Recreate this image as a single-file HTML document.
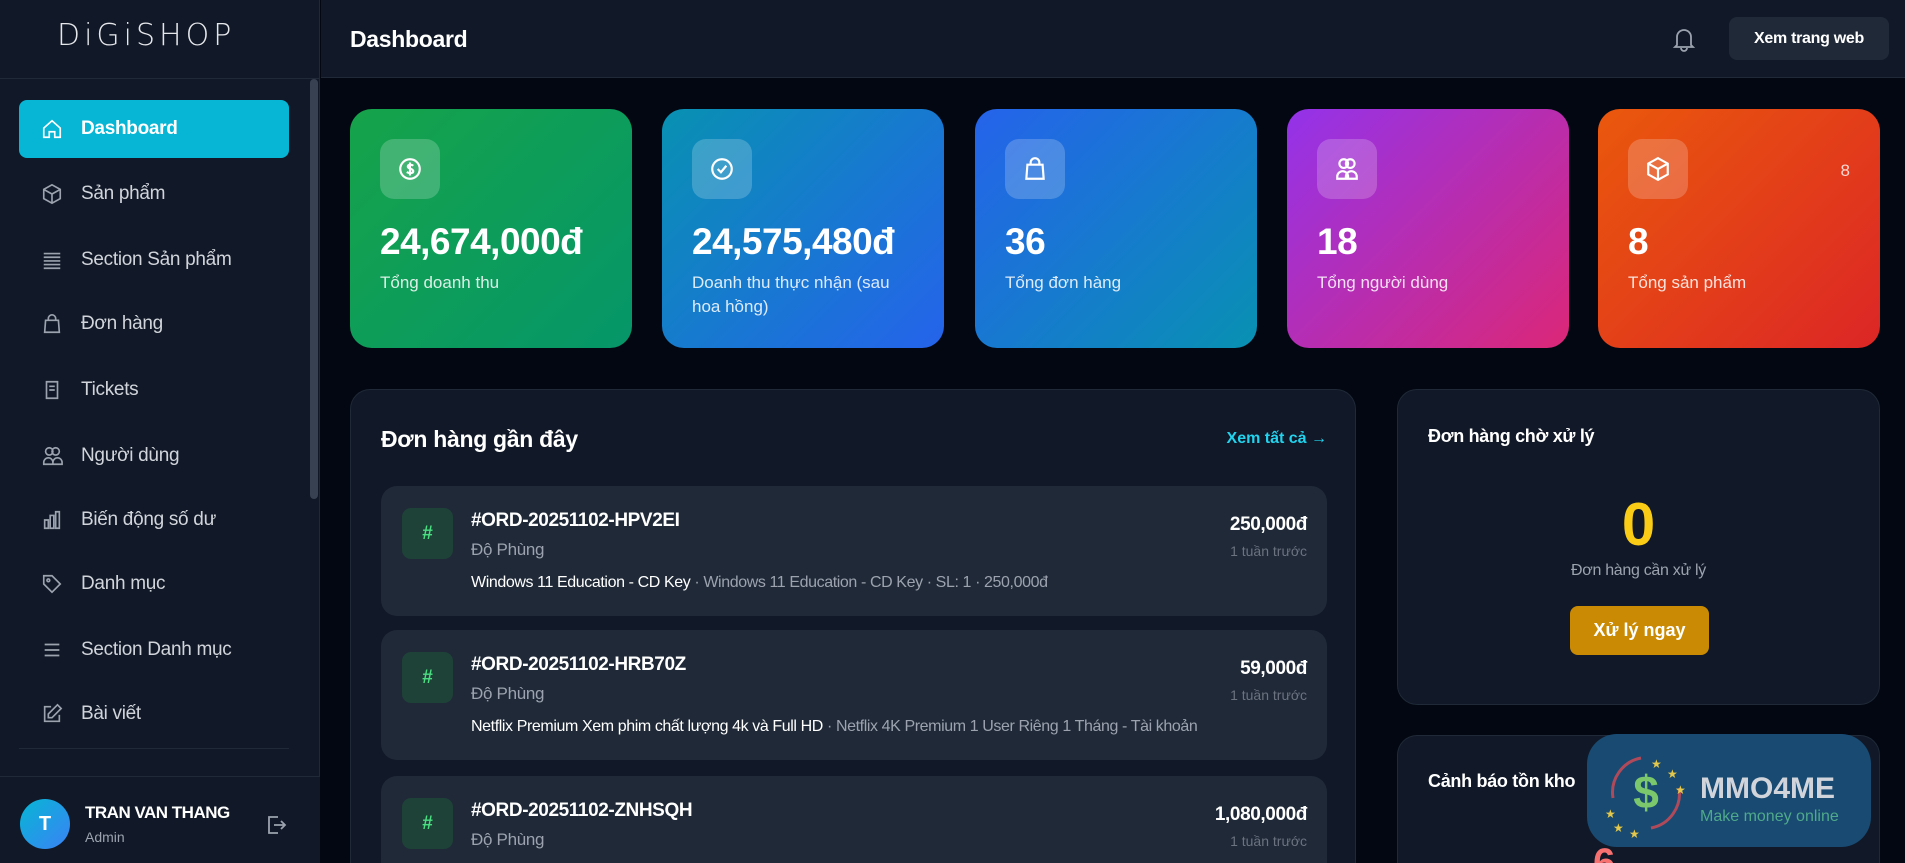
<!DOCTYPE html>
<html style="width:1905px;height:863px;overflow:hidden"><head><meta charset="utf-8">
<style>
*{box-sizing:border-box;margin:0;padding:0}
body{width:1905px;height:863px;overflow:hidden;background:#030712;font-family:"Liberation Sans","DejaVu Sans",sans-serif;color:#fff;position:relative}
.side{position:absolute;left:0;top:0;width:320px;height:863px;background:#111827;border-right:1px solid #1f2937}
.logo{position:absolute;left:57px;top:18px;font-size:30px;letter-spacing:4px;font-weight:300;color:#e5e7eb;font-family:"DejaVu Sans",sans-serif}
.sidetop{position:absolute;left:0;top:78px;width:320px;border-top:1px solid #1f2937}
.nav{position:absolute;left:19px;width:270px;height:58px;border-radius:8px;display:flex;align-items:center;padding-left:22px;font-size:19px;color:#d1d5db;letter-spacing:-0.3px}
.nav svg{width:22px;height:22px;margin-right:18px;stroke:#9ca3af;fill:none;stroke-width:1.8}
.nav.act{background:#06b6d4;color:#fff;font-weight:bold}
.nav.act svg{stroke:#fff}
.scroll{position:absolute;left:310px;top:79px;width:8px;height:420px;background:#374151;border-radius:4px}
.user{position:absolute;left:0;top:776px;width:320px;height:87px;border-top:1px solid #1f2937;background:#111827}
.av{position:absolute;left:20px;top:22px;width:50px;height:50px;border-radius:50%;background:linear-gradient(135deg,#06b6d4,#3b82f6);display:flex;align-items:center;justify-content:center;font-weight:bold;font-size:20px}
.header{position:absolute;left:321px;top:0;width:1584px;height:78px;background:#111827;border-bottom:1px solid #1f2937}
.card{position:absolute;top:109px;width:282px;height:239px;border-radius:22px;padding:30px 30px}
.ib{width:60px;height:60px;border-radius:14px;background:rgba(255,255,255,.2);display:flex;align-items:center;justify-content:center}
.ib svg{width:26px;height:26px;stroke:#fff;fill:none;stroke-width:2}
.num{font-size:37px;font-weight:bold;margin-top:22px;letter-spacing:-0.5px}
.lab{font-size:17px;color:rgba(255,255,255,.85);margin-top:8px;line-height:24px}
.panel{position:absolute;background:#111827;border:1px solid #1f2937;border-radius:20px;overflow:hidden}
.ord{position:absolute;left:30px;width:946px;height:130px;background:#1f2937;border-radius:16px}
.hash{position:absolute;left:21px;top:22px;width:51px;height:51px;background:#1e4237;border-radius:9px;color:#4ade80;font-weight:bold;font-size:19px;display:flex;align-items:center;justify-content:center}
.oid{position:absolute;left:90px;top:24px;font-size:19px;font-weight:bold;letter-spacing:-0.4px}
.nm{position:absolute;left:90px;top:54px;font-size:17px;color:#9ca3af;letter-spacing:-0.3px}
.pr{position:absolute;left:90px;top:88px;font-size:16px;color:#fff;letter-spacing:-0.4px;white-space:nowrap;width:830px;overflow:hidden;text-overflow:ellipsis}
.pr span{color:#9ca3af}
.pc{position:absolute;right:20px;top:28px;font-size:19px;font-weight:bold;text-align:right;letter-spacing:-0.4px}
.tm{position:absolute;right:20px;top:57px;font-size:14px;color:#6b7280}
</style></head><body>
<div class="side">
 <div class="logo">DiGiSHOP</div>
 <div class="sidetop"></div>
 <div class="nav act" style="top:100px"><svg viewBox="0 0 24 24"><path d="M3 11l9-8 9 8v10h-6v-6h-6v6H3z"/></svg>Dashboard</div>
 <div class="nav" style="top:165px"><svg viewBox="0 0 24 24"><path d="M12 2l9 5v10l-9 5-9-5V7z M3 7l9 5 9-5 M12 12v10"/></svg>Sản phẩm</div>
 <div class="nav" style="top:231px"><svg viewBox="0 0 24 24"><path d="M3 5h18M3 9h18M3 13h18M3 17h18M3 21h18"/></svg>Section Sản phẩm</div>
 <div class="nav" style="top:295px"><svg viewBox="0 0 24 24"><path d="M5 8h14l1 13H4z M8 8V6a4 4 0 018 0v2"/></svg>Đơn hàng</div>
 <div class="nav" style="top:361px"><svg viewBox="0 0 24 24"><path d="M6 3h12v18H6z M9 8h6M9 12h6"/></svg>Tickets</div>
 <div class="nav" style="top:427px"><svg viewBox="0 0 24 24"><circle cx="9" cy="7" r="4"/><circle cx="16" cy="7" r="4"/><path d="M3 21v-2a5 5 0 0110 0v2zM13 21v-2a5 5 0 0110 0v2z"/></svg>Người dùng</div>
 <div class="nav" style="top:491px"><svg viewBox="0 0 24 24"><path d="M4 21V12h4v9zM10 21V7h4v14zM16 21V3h4v18z"/></svg>Biến động số dư</div>
 <div class="nav" style="top:555px"><svg viewBox="0 0 24 24"><path d="M3 3h9l9 9-9 9-9-9z"/><circle cx="8" cy="8" r="1.5"/></svg>Danh mục</div>
 <div class="nav" style="top:621px"><svg viewBox="0 0 24 24"><path d="M4 6h16M4 12h16M4 18h16"/></svg>Section Danh mục</div>
 <div class="nav" style="top:685px"><svg viewBox="0 0 24 24"><path d="M11 4H4v16h16v-7 M18 2l4 4-10 10H8v-4z"/></svg>Bài viết</div>
 <div style="position:absolute;left:19px;top:748px;width:270px;border-top:1px solid #1f2937"></div>
 <div class="scroll"></div>
 <div class="user">
  <div class="av">T</div>
  <div style="position:absolute;left:85px;top:26px;font-size:17px;font-weight:bold;letter-spacing:-0.5px">TRAN VAN THANG</div>
  <div style="position:absolute;left:85px;top:52px;font-size:14px;color:#9ca3af">Admin</div>
  <svg style="position:absolute;left:264px;top:36px" width="24" height="24" viewBox="0 0 24 24" fill="none" stroke="#9ca3af" stroke-width="1.8"><path d="M14 4H5v16h9 M10 12h11 M17 8l4 4-4 4"/></svg>
 </div>
</div>
<div class="header">
 <div style="position:absolute;left:29px;top:26px;font-size:23px;font-weight:bold;letter-spacing:-0.3px">Dashboard</div>
 <svg style="position:absolute;left:1351px;top:26px" width="24" height="26" viewBox="0 0 24 26" fill="none" stroke="#9ca3af" stroke-width="1.8"><path d="M5 19V11a7 7 0 0114 0v8l2 2H3z M9 22a3 3 0 006 0"/></svg>
 <div style="position:absolute;left:1408px;top:17px;width:160px;height:43px;background:#1f2937;border-radius:8px;font-size:16px;font-weight:bold;display:flex;align-items:center;justify-content:center;letter-spacing:-0.3px">Xem trang web</div>
</div>
<div class="card" style="left:350px;background:linear-gradient(135deg,#16a34a,#059669)"><div class="ib"><svg viewBox="0 0 24 24"><circle cx="12" cy="12" r="9"/><path d="M15 9c-1-1-5-1.5-5 .8S15 11.5 15 14s-4 2-6 .8M12 6v12"/></svg></div><div class="num">24,674,000đ</div><div class="lab">Tổng doanh thu</div></div>
<div class="card" style="left:662px;background:linear-gradient(135deg,#0891b2,#2563eb)"><div class="ib"><svg viewBox="0 0 24 24"><circle cx="12" cy="12" r="9"/><path d="M8 12l3 3 5-6"/></svg></div><div class="num">24,575,480đ</div><div class="lab">Doanh thu thực nhận (sau hoa hồng)</div></div>
<div class="card" style="left:975px;background:linear-gradient(135deg,#2563eb,#0891b2)"><div class="ib"><svg viewBox="0 0 24 24"><path d="M5 8h14l1 13H4z M8 8V6a4 4 0 018 0v2"/></svg></div><div class="num">36</div><div class="lab">Tổng đơn hàng</div></div>
<div class="card" style="left:1287px;background:linear-gradient(135deg,#9333ea,#db2777)"><div class="ib"><svg viewBox="0 0 24 24"><circle cx="9" cy="7" r="4"/><circle cx="15" cy="7" r="4"/><path d="M3 21v-2a5 5 0 0110 0v2zM11 21v-2a5 5 0 0110 0v2z"/></svg></div><div class="num">18</div><div class="lab">Tổng người dùng</div></div>
<div class="card" style="left:1598px;background:linear-gradient(135deg,#ea580c,#dc2626)"><div class="ib"><svg viewBox="0 0 24 24"><path d="M12 2l9 5v10l-9 5-9-5V7z M3 7l9 5 9-5 M12 12v10"/></svg></div><div style="position:absolute;right:30px;top:52px;font-size:17px;color:rgba(255,255,255,.8)">8</div><div class="num">8</div><div class="lab">Tổng sản phẩm</div></div>

<div class="panel" style="left:350px;top:389px;width:1006px;height:474px;border-bottom:none;border-bottom-left-radius:0;border-bottom-right-radius:0">
 <div style="position:absolute;left:30px;top:36px;font-size:23px;font-weight:bold;letter-spacing:-0.3px">Đơn hàng gần đây</div>
 <div style="position:absolute;right:28px;top:40px;font-size:16px;font-weight:bold;color:#22d3ee">Xem tất cả →</div>
 <div class="ord" style="top:96px"><div class="hash">#</div><div class="oid">#ORD-20251102-HPV2EI</div><div class="nm">Độ Phùng</div><div class="pr">Windows 11 Education - CD Key <span>· Windows 11 Education - CD Key · SL: 1 · 250,000đ</span></div><div class="pc">250,000đ</div><div class="tm">1 tuần trước</div></div>
 <div class="ord" style="top:240px"><div class="hash">#</div><div class="oid">#ORD-20251102-HRB70Z</div><div class="nm">Độ Phùng</div><div class="pr">Netflix Premium Xem phim chất lượng 4k và Full HD <span>· Netflix 4K Premium 1 User Riêng 1 Tháng - Tài khoản</span></div><div class="pc">59,000đ</div><div class="tm">1 tuần trước</div></div>
 <div class="ord" style="top:386px"><div class="hash">#</div><div class="oid">#ORD-20251102-ZNHSQH</div><div class="nm">Độ Phùng</div><div class="pc">1,080,000đ</div><div class="tm">1 tuần trước</div></div>
</div>

<div class="panel" style="left:1397px;top:389px;width:483px;height:316px">
 <div style="position:absolute;left:30px;top:36px;font-size:18px;font-weight:bold;letter-spacing:-0.3px">Đơn hàng chờ xử lý</div>
 <div style="position:absolute;left:0;width:100%;top:100px;text-align:center;font-size:60px;font-weight:bold;color:#facc15">0</div>
 <div style="position:absolute;left:0;width:100%;top:172px;text-align:center;font-size:16px;color:#9ca3af;letter-spacing:-0.3px">Đơn hàng cần xử lý</div>
 <div style="position:absolute;left:172px;top:216px;width:139px;height:49px;background:#ca8a04;border-radius:8px;display:flex;align-items:center;justify-content:center;font-size:18px;font-weight:bold">Xử lý ngay</div>
</div>
<div class="panel" style="left:1397px;top:735px;width:483px;height:128px;border-bottom:none;border-bottom-left-radius:0;border-bottom-right-radius:0">
 <div style="position:absolute;left:30px;top:35px;font-size:18px;font-weight:bold;letter-spacing:-0.3px">Cảnh báo tồn kho</div>
 <div style="position:absolute;left:195px;top:105px;font-size:40px;font-weight:bold;color:#f87171">6</div>
</div>

<div style="position:absolute;left:1587px;top:734px;width:284px;height:113px;background:#184a72;border-radius:30px">
 <svg style="position:absolute;left:14px;top:14px" width="90" height="90" viewBox="0 0 90 90">
  <path d="M40 10 A35 35 0 0 0 12 50" fill="none" stroke="#b04a5a" stroke-width="3"/>
  <path d="M50 80 A35 35 0 0 0 78 40" fill="none" stroke="#b04a5a" stroke-width="3"/>
  <text x="45" y="60" text-anchor="middle" font-size="46" font-weight="bold" fill="#7bc86c" font-family="Liberation Sans">$</text>
  <text x="50" y="20" font-size="12" fill="#e5c84a">★</text><text x="66" y="30" font-size="12" fill="#e5c84a">★</text><text x="74" y="46" font-size="12" fill="#e5c84a">★</text>
  <text x="4" y="70" font-size="12" fill="#e5c84a">★</text><text x="12" y="84" font-size="12" fill="#e5c84a">★</text><text x="28" y="90" font-size="12" fill="#e5c84a">★</text>
 </svg>
 <div style="position:absolute;left:113px;top:38px;font-size:30px;font-weight:bold;color:#d1d5db">MMO4ME</div>
 <div style="position:absolute;left:113px;top:74px;font-size:16px;color:#4fa98a">Make money online</div>
</div>
</body></html>
